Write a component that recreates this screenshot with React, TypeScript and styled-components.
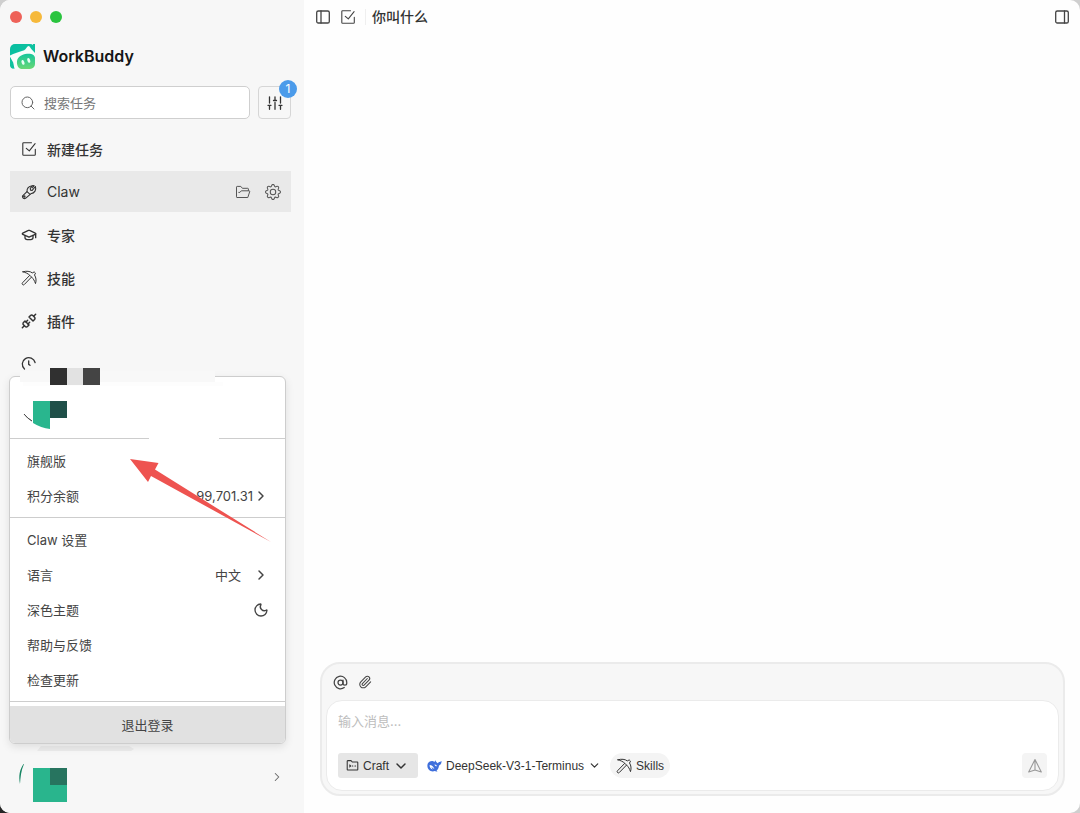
import React from "react";
import styled, { createGlobalStyle } from "styled-components";
import {
  ChevronDown,
  ChevronRight,
  GraduationCap,
  AtSign,
  Moon,
  Paperclip,
  Search,
  Unplug,
} from "lucide-react";
import { BsGear } from "react-icons/bs";

const GlobalStyle = createGlobalStyle`
  *, *::before, *::after { box-sizing: border-box; }
  body {
    margin: 0;
    background: linear-gradient(to top right, #222 0, #333 1%, #cfcfcf 2%);
    color: #333;
    font-family: Inter, "Noto Sans CJK SC", sans-serif;
    font-size: 13px;
  }
  button, input, textarea {
    font: inherit;
    color: inherit;
    margin: 0;
  }
  button {
    display: inline-flex;
    align-items: center;
    border: 0;
    padding: 0;
    background: none;
    cursor: pointer;
  }
  svg { display: block; flex: none; }
`;

const Window = styled.div`
  display: flex;
  min-height: 100vh;
  border-radius: 10px;
  overflow: hidden;
  background: #fefefe;
`;

const Sidebar = styled.aside`
  display: flex;
  flex-direction: column;
  flex: none;
  width: 304px;
  padding-left: 10px;
  background: #f7f7f7;
`;

const TrafficLights = styled.div`
  display: flex;
  align-items: center;
  gap: 8px;
  height: 34px;
`;

const Light = styled.span<{ $color: string }>`
  width: 12px;
  height: 12px;
  border-radius: 50%;
  background: ${(p) => p.$color};
`;

const Brand = styled.div`
  display: flex;
  align-items: center;
  gap: 8px;
  height: 44px;
  color: #161616;
  font-size: 16px;
  font-weight: 600;
`;

const SearchRow = styled.div`
  display: flex;
  gap: 8px;
  padding: 8px 13px 9px 0;
`;

const SearchBox = styled.label`
  display: flex;
  flex: 1;
  min-width: 0;
  align-items: center;
  gap: 8px;
  height: 33px;
  padding: 0 9px;
  border: 1px solid #cfcfcf;
  border-radius: 5px;
  background: #fff;
  color: #666;
`;

const SearchInput = styled.input`
  flex: 1;
  min-width: 0;
  border: 0;
  padding: 0;
  outline: 0;
  background: none;
  &::placeholder { color: #777; opacity: 1; }
`;

const FilterButton = styled.button`
  && {
    position: relative;
    justify-content: center;
    width: 33px;
    height: 33px;
    border: 1px solid #d6d6d6;
    border-radius: 4px;
  }
`;

const Badge = styled.span`
  position: absolute;
  top: -7px;
  right: -7px;
  width: 18px;
  height: 18px;
  border-radius: 50%;
  background: #4b9bea;
  color: #fff;
  font-size: 12px;
  line-height: 18px;
  text-align: center;
`;

const Nav = styled.nav`
  display: flex;
  flex-direction: column;
  gap: 2px;
  padding-right: 13px;
`;

const NavItem = styled.div<{ $active?: boolean }>`
  display: flex;
  align-items: center;
  height: 41px;
  padding: 0 10px 0 11px;
  background: ${(p) => (p.$active ? "#e9e9e9" : "transparent")};
`;

const NavLink = styled.button<{ $light?: boolean }>`
  && {
    flex: 1;
    gap: 10px;
    height: 100%;
    color: #333;
    font-size: 14px;
    font-weight: ${(p) => (p.$light ? 400 : 500)};
  }
`;

const NavActions = styled.div`
  display: flex;
  gap: 14px;
  color: #555;
`;

const Account = styled.div`
  position: relative;
  display: flex;
  align-items: center;
  justify-content: space-between;
  height: 69px;
  margin-top: auto;
  padding: 10px 20px 0 8px;
`;

const AccountChevron = styled.button`
  && {
    color: #666;
    padding-bottom: 14px;
  }
`;

const Menu = styled.div`
  position: absolute;
  left: -1px;
  bottom: 100%;
  width: 277px;
  border: 1px solid #cdcdcd;
  border-radius: 6px;
  background: #fff;
  box-shadow: 0 3px 8px rgba(0, 0, 0, 0.1);
`;

const Profile = styled.div`
  position: relative;
  height: 61px;
`;

const ProfileArt = styled.svg`
  position: absolute;
  left: 8px;
  top: -9px;
`;

const Section = styled.div`
  padding: 4px 0;
  border-top: 1px solid #cdcdcd;
`;

const MenuRow = styled.button`
  && {
    justify-content: space-between;
    width: 100%;
    height: 35px;
    padding: 0 16px 0 17px;
    color: #444;
  }
`;

const RowValue = styled.span<{ $gap: number }>`
  display: inline-flex;
  align-items: center;
  gap: ${(p) => p.$gap}px;
`;

const Logout = styled.button`
  && {
    justify-content: center;
    width: 100%;
    height: 37px;
    border-radius: 0 0 5px 5px;
    background: #e1e1e1;
    color: #444;
  }
`;

const LogoutSection = styled.div`
  padding-top: 4px;
  border-top: 1px solid #cdcdcd;
`;

const Pointer = styled.svg`
  position: absolute;
  left: 120px;
  top: 82px;
  pointer-events: none;
`;

const MenuShade = styled.svg`
  position: absolute;
  left: 27px;
  top: 0;
`;

const Main = styled.main`
  display: flex;
  flex: 1;
  flex-direction: column;
  min-width: 0;
`;

const TopBar = styled.header`
  display: flex;
  align-items: center;
  height: 34px;
  padding: 0 10px 0 11px;
  gap: 9px;
  color: #444;
`;

const Title = styled.h1`
  flex: 1;
  margin: 0;
  padding-left: 6px;
  border-left: 1px solid #efefef;
  color: #333;
  font-size: 14px;
  font-weight: 500;
  line-height: 16px;
`;

const Conversation = styled.section`
  flex: 1;
`;

const Composer = styled.form`
  margin: 0 15px 17px 16px;
  padding: 0 4px 3px;
  border: 2px solid #ebebeb;
  border-radius: 20px;
  background: #f7f7f7;
`;

const ComposerTools = styled.div`
  display: flex;
  align-items: center;
  gap: 10px;
  height: 36px;
  padding-left: 7px;
  color: #444;
`;

const ComposerBody = styled.div`
  display: flex;
  flex-direction: column;
  gap: 12px;
  padding: 10px 11px 12px;
  border: 1px solid #ebebeb;
  border-radius: 16px;
  background: #fff;
`;

const MessageInput = styled.textarea`
  display: block;
  width: 100%;
  height: 30px;
  padding: 0;
  border: 0;
  outline: 0;
  resize: none;
  background: none;
  line-height: 20px;
  &::placeholder { color: #bdbdbd; opacity: 1; }
`;

const Controls = styled.div`
  display: flex;
  align-items: center;
  gap: 9px;
  font-family: "Liberation Sans", "Noto Sans CJK SC", sans-serif;
  font-size: 12px;
`;

const Chip = styled.button<{ $tone?: "solid" | "pill" }>`
  && {
    gap: 4px;
    height: 25px;
    padding: ${(p) => (p.$tone === "solid" ? "0 9px 0 8px" : p.$tone === "pill" ? "0 6px" : "0")};
    border-radius: ${(p) => (p.$tone === "pill" ? 13 : 3)}px;
    background: ${(p) => (p.$tone === "solid" ? "#e6e6e6" : p.$tone === "pill" ? "#f4f4f4" : "none")};
    color: #333;
  }
`;

const SendButton = styled.button`
  && {
    justify-content: center;
    width: 25px;
    height: 25px;
    margin-left: auto;
    border-radius: 4px;
    background: #f4f4f4;
    color: #999;
  }
`;

type GlyphProps = { size?: number; weight?: number; children: React.ReactNode };

const Glyph = ({ size = 16, weight = 1.1, children }: GlyphProps) => (
  <svg
    width={size}
    height={size}
    viewBox="0 0 16 16"
    fill="none"
    stroke="currentColor"
    strokeWidth={weight}
    strokeLinecap="round"
    strokeLinejoin="round"
    aria-hidden="true"
  >
    {children}
  </svg>
);

const TaskIcon = () => (
  <Glyph>
    <path d="M10.5 1.8H2.6a.8.8 0 0 0-.8.8v10.9a.8.8 0 0 0 .8.8h10.9a.8.8 0 0 0 .8-.8V8.2" />
    <path d="M5.3 7.3l3 2.6 5.800-7.200" />
  </Glyph>
);

const ClawIcon = () => (
  <Glyph weight={1.100}>
    <path d="M1.600 11.800L6 7.600C5.800 4.400 8 2.300 11.300 1.800L9.300 4.300l.2 1.900 1.700.2 3.200-3.900c1 3.300-.5 6.600-4.600 7.300l-5.300 4.500a2 2 0 0 1-2.900-2.500z" />
    <path d="M6 7.600l2.800 2.600M11.300 1.800l1.800-.2-1.600 2.200" />
    <circle cx="3.300" cy="12.600" r=".7" />
  </Glyph>
);

const PickaxeIcon = () => (
  <Glyph weight={1}>
    <path d="M1.900 1.800C5.500.7 9.100 1.200 11.300 2.900l1.900-1 1.300 1.300-1 1.800c1.600 2.500 2 5.400 1 8.600-1-3-2.100-4.700-4-6.600L8.800 5.300C6.800 3.500 4.800 2.500 1.900 1.800z" />
    <path d="M8.600 5.500L1.500 12.800a1.200 1.200 0 0 0 1.800 1.700l7.100-7.300" />
  </Glyph>
);

const ClockIcon = () => (
  <Glyph weight={1.300}>
    <path d="M3.500 13a6.500 6.500 0 1 1 10.600-6.500" />
    <path d="M7.700 4.800v3.600l1.300.9" />
  </Glyph>
);

const FolderIcon = () => (
  <Glyph weight={1}>
    <path d="M3.600 13.500H2.200a.7.700 0 0 1-.7-.7V3.100a.7.700 0 0 1 .7-.7h3.600l1.600 1.900h5.300a.7.700 0 0 1 .7.700v1.500" />
    <path d="M2.200 13.500h10.600l1.900-5.800a.7.700 0 0 0-.7-.9H6.300L4.900 8.400H3.800" />
  </Glyph>
);

const SlidersIcon = () => (
  <Glyph weight={1.300}>
    <path d="M2.500 1.800v6.200M2.500 10.300v4M1 10.300h3M8 1.800v3.500M8 7.500v6.800M6.500 5.500h3M13.500 1.800v6.200M13.500 10.300v4M12 10.300h3" />
  </Glyph>
);

const PanelIcon = ({ divider }: { divider: number }) => (
  <Glyph weight={1.300}>
    <rect x="1.700" y="2" width="12.600" height="12" rx="1.600" />
    <path d={`M${divider} 2v12`} />
  </Glyph>
);

const CraftIcon = () => (
  <Glyph size={13} weight={1.300}>
    <path d="M1.500 2.600V13a.6.600 0 0 0 .6.600h11.800a.6.600 0 0 0 .6-.6V4.300a.6.600 0 0 0-.6-.6H7.700L6.200 2H2.100a.6.600 0 0 0-.6.600z" />
    <path d="M4.400 7.400l1.300 1.200-1.300 1.200M7.600 8.600h.8M11 8.600h.8" />
  </Glyph>
);

const SendIcon = () => (
  <Glyph>
    <path d="M8 1.500L1.700 14 8 12l6.300 2L8 1.500zM8 2v10" />
  </Glyph>
);

const WhaleIcon = () => (
  <svg width="15" height="14" viewBox="0 0 15 14" aria-hidden="true">
    <path
      fill="#3f6fdc"
      d="M.4 6.200C.6 3.500 2.800 2 5.300 2.100c.9 0 1.300.3 2.100.9.600-.6.400-1.300 1-1.800.3 1.600 1.500 2.200 2.500 3.100.4-1.300 1.800-1 3.700-2.200-.1 2.400-1 3.900-2.600 4.300-.1 2.300-1.100 4-2.500 5.100l1 .8c-1 .4-2 .2-2.800-.2C3.700 13.400.1 10.300.4 6.200z"
    />
    <path fill="#fff" d="M2.600 5.900c2.300.2 3.600 1.500 4.800 3.900-1.400-.2-2-1.300-2.900-1.800.1 1 .6 1.700 1.400 2.400C3.900 10.100 2.500 8.300 2.600 5.900zM7.500 5.500c1.200-.2 2.300.6 2.300 1.800-.9.200-2-.6-2.300-1.800z" />
  </svg>
);

const Logo = () => (
  <svg width="25" height="25" viewBox="0 0 25 25" aria-hidden="true">
    <defs>
      <linearGradient id="brand" x1="0" y1="0" x2="1" y2="1">
        <stop offset="0" stopColor="#08bda0" />
        <stop offset="1" stopColor="#12c7a0" />
      </linearGradient>
      <linearGradient id="snout" x1="0" y1="0" x2="0" y2="1">
        <stop offset="0" stopColor="#15c69b" />
        <stop offset="1" stopColor="#6ad875" />
      </linearGradient>
    </defs>
    <rect width="25" height="25" rx="5" fill="url(#brand)" />
    <path d="M0 11.500c4-2 9-3.300 14.200-5.200C16 5.300 17.200 2 18.700 2c1.300 0 1.800 2.500 3.500 4L25 9v16H4.500L3.200 18.500 0 12.800z" fill="#f8fdfb" />
    <path d="M0 13.400c1.300 3.900 2.200 7.600 3 11.300A4 4 0 0 1 0 21z" fill="#12c39d" />
    <path d="M7 17.200c.6-4.500 5-6.900 10-7.400 4-.4 7.600.4 8 4V20a5 5 0 0 1-5 5h-8.500C8.400 24.800 6.500 21 7 17.200z" fill="url(#snout)" />
    <ellipse cx="13" cy="18.400" rx="1.400" ry="2.500" fill="#e9fff3" transform="rotate(-20 13 18.400)" />
    <ellipse cx="18.800" cy="16.400" rx="1.400" ry="2.500" fill="#e9fff3" transform="rotate(-20 18.800 16.400)" />
    <path d="M23 0h2v8c-1.200-2.500-2-5-2-8z" fill="#0ebf9f" />
  </svg>
);

const AccountAvatar = () => (
  <svg width="50" height="42" viewBox="0 0 50 42" aria-hidden="true">
    <path d="M5.500 1C1.500 7 .5 13 2 21 2.500 14 3 8 6 1z" fill="#168563" />
    <path d="M15 5h34v34H15z" fill="#29b58d" />
    <path d="M32 5h17v17H32z" fill="#27745f" />
  </svg>
);

const ProfileBlocks = () => (
  <ProfileArt width="215" height="72" viewBox="0 0 215 72" aria-hidden="true">
    <path d="M2 3h195v11H2z" fill="#f8f8f8" />
    <path d="M5 14h200v4H5z" fill="#fdfdfd" />
    <path d="M32 0h17v17H32z" fill="#303030" />
    <path d="M49 0h17v17H49z" fill="#e2e2e2" />
    <path d="M65 0h17v17H65z" fill="#444" />
    <path d="M6 46q3 4 8 7q-4-2-8-7z" stroke="#444" strokeWidth=".8" />
    <path d="M15 33h17v28q-9-1-17-6z" fill="#29b68e" />
    <path d="M32 33h17v17H32z" fill="#1f4f48" />
    <path d="M131 69h70v3h-70z" fill="#fff" />
  </ProfileArt>
);

const navItems = [
  { label: "新建任务", icon: <TaskIcon /> },
  { label: "Claw", icon: <ClawIcon />, active: true },
  { label: "专家", icon: <GraduationCap size={16} strokeWidth={2} /> },
  { label: "技能", icon: <PickaxeIcon /> },
  { label: "插件", icon: <Unplug size={16} strokeWidth={2.200} /> },
  { label: "", icon: <ClockIcon /> },
];

export default function App() {
  return (
    <>
      <GlobalStyle />
      <Window>
        <Sidebar>
          <TrafficLights>
            <Light $color="#ee6259" />
            <Light $color="#f6b93b" />
            <Light $color="#2ac43f" />
          </TrafficLights>
          <Brand>
            <Logo />
            WorkBuddy
          </Brand>
          <SearchRow>
            <SearchBox>
              <Search size={16} strokeWidth={1.500} />
              <SearchInput type="text" placeholder="搜索任务" aria-label="搜索任务" />
            </SearchBox>
            <FilterButton type="button" aria-label="筛选">
              <SlidersIcon />
              <Badge>1</Badge>
            </FilterButton>
          </SearchRow>
          <Nav>
            {navItems.map((item) => (
              <NavItem key={item.label} $active={item.active}>
                <NavLink type="button" $light={item.active}>
                  {item.icon}
                  {item.label}
                </NavLink>
                {item.active && (
                  <NavActions>
                    <button type="button" aria-label="文件夹">
                      <FolderIcon />
                    </button>
                    <button type="button" aria-label="设置">
                      <BsGear size={16} />
                    </button>
                  </NavActions>
                )}
              </NavItem>
            ))}
          </Nav>
          <Account>
            <AccountAvatar />
            <AccountChevron type="button" aria-label="账户">
              <ChevronRight size={14} strokeWidth={1.800} />
            </AccountChevron>
            <MenuShade width="98" height="8" viewBox="0 0 98 8" aria-hidden="true">
              <path d="M4 2h88l5 3-3 2H0z" fill="#ececec" />
            </MenuShade>
            <Menu>
              <Profile>
                <ProfileBlocks />
              </Profile>
              <Section>
                <MenuRow type="button">旗舰版</MenuRow>
                <MenuRow type="button">
                  积分余额
                  <RowValue $gap={0}>
                    99,701.31
                    <ChevronRight size={16} strokeWidth={2.200} />
                  </RowValue>
                </MenuRow>
              </Section>
              <Section>
                <MenuRow type="button">Claw 设置</MenuRow>
                <MenuRow type="button">
                  语言
                  <RowValue $gap={12}>
                    中文
                    <ChevronRight size={16} strokeWidth={2.200} />
                  </RowValue>
                </MenuRow>
                <MenuRow type="button">
                  深色主题
                  <Moon size={16} strokeWidth={2} />
                </MenuRow>
                <MenuRow type="button">帮助与反馈</MenuRow>
                <MenuRow type="button">检查更新</MenuRow>
              </Section>
              <LogoutSection>
                <Logout type="button">退出登录</Logout>
              </LogoutSection>
              <Pointer width="142" height="84" viewBox="0 0 142 84" aria-hidden="true">
                <path d="M0 0L28.500 4 25 10.500 141 83 21 17 18 23z" fill="#ee5350" />
              </Pointer>
            </Menu>
          </Account>
        </Sidebar>
        <Main>
          <TopBar>
            <button type="button" aria-label="侧边栏">
              <PanelIcon divider={6} />
            </button>
            <button type="button" aria-label="新建任务">
              <TaskIcon />
            </button>
            <Title>你叫什么</Title>
            <button type="button" aria-label="右侧面板">
              <PanelIcon divider={10.500} />
            </button>
          </TopBar>
          <Conversation />
          <Composer>
            <ComposerTools>
              <button type="button" aria-label="提及">
                <AtSign size={15} strokeWidth={2} />
              </button>
              <button type="button" aria-label="附件">
                <Paperclip size={14} strokeWidth={1.800} />
              </button>
            </ComposerTools>
            <ComposerBody>
              <MessageInput placeholder="输入消息..." aria-label="输入消息" />
              <Controls>
                <Chip type="button" $tone="solid">
                  <CraftIcon />
                  Craft
                  <ChevronDown size={16} strokeWidth={2.200} />
                </Chip>
                <Chip type="button">
                  <WhaleIcon />
                  DeepSeek-V3-1-Terminus
                  <ChevronDown size={13} strokeWidth={2.200} />
                </Chip>
                <Chip type="button" $tone="pill">
                  <PickaxeIcon />
                  Skills
                </Chip>
                <SendButton type="submit" aria-label="发送">
                  <SendIcon />
                </SendButton>
              </Controls>
            </ComposerBody>
          </Composer>
        </Main>
      </Window>
    </>
  );
}
